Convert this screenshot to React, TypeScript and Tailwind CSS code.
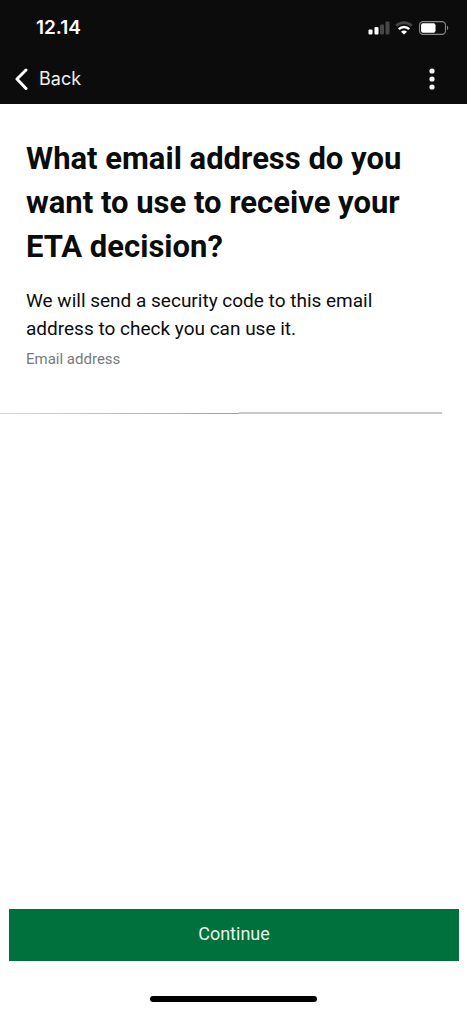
import { useState } from "react";

function StatusBar() {
  return (
    <div className="flex h-14 items-center justify-between pl-9 pr-[18px]">
      <span className="font-['Inter',sans-serif] text-[19px] font-semibold">12.14</span>
      <div className="flex items-center gap-[5px]">
        {/* Signal */}
        <svg width="22" height="14" viewBox="0 0 22 14" aria-hidden="true">
          <rect x="0.5" y="8.5" width="4" height="5" rx="1" fill="#fff" />
          <rect x="6.5" y="6" width="4" height="7.5" rx="1" fill="#fff" />
          <rect x="12" y="3.5" width="4" height="10" rx="1" fill="#464646" />
          <rect x="17.5" y="0.5" width="4" height="13" rx="1" fill="#464646" />
        </svg>
        {/* Wifi */}
        <svg width="18" height="14" viewBox="0 0 18 14" fill="none" aria-hidden="true">
          <path d="M1.2 4.8C5.5 0.6 12.5 0.6 16.8 4.8" stroke="#464646" strokeWidth="2.6" />
          <path d="M3.8 8.2C6.8 5.2 11.2 5.2 14.2 8.2" stroke="#fff" strokeWidth="2.6" />
          <path d="M9 13.5L6 10.7C7.6 9.1 10.4 9.1 12 10.7Z" fill="#fff" />
        </svg>
        {/* Battery */}
        <svg width="31" height="14" viewBox="0 0 31 14" fill="none" aria-hidden="true">
          <rect x="1.5" y="0.6" width="26" height="12.8" rx="3.6" stroke="#8a8a8a" strokeWidth="1.1" />
          <rect x="3" y="2.2" width="14.5" height="9.6" rx="2" fill="#fff" />
          <path d="M29 4.8C30.6 5.4 30.6 8.6 29 9.2Z" fill="#8a8a8a" />
        </svg>
      </div>
    </div>
  );
}

function NavBar() {
  return (
    <div className="flex h-12 items-center justify-between pl-3.5 pr-6 pb-0.5">
      <button type="button" className="flex items-center gap-[11px] text-[#f0f0f0]">
        <svg width="14" height="24" viewBox="0 0 14 24" fill="none" aria-hidden="true">
          <path
            d="M12 3L3 12L12 21.5"
            stroke="#fff"
            strokeWidth="3"
            strokeLinecap="round"
            strokeLinejoin="round"
          />
        </svg>
        <span className="font-['Inter',sans-serif] text-lg">Back</span>
      </button>
      <button type="button" aria-label="More options" className="flex w-[22px] justify-center">
        <svg width="6" height="22" viewBox="0 0 6 22" fill="#f5f5f5" aria-hidden="true">
          <circle cx="3" cy="3" r="2.6" />
          <circle cx="3" cy="11" r="2.6" />
          <circle cx="3" cy="19" r="2.6" />
        </svg>
      </button>
    </div>
  );
}

export default function App() {
  const [email, setEmail] = useState("");

  return (
    <div className="flex min-h-screen flex-col bg-white font-['Roboto',sans-serif] text-[#0b0c0c]">
      <header className="bg-[#0c0c0c] text-white">
        <StatusBar />
        <NavBar />
      </header>

      <main className="flex flex-1 flex-col">
        <div className="px-[26px] pt-[33px]">
          <h1 className="text-[31px] leading-11 font-bold">
            What email address do you want to use to receive your ETA decision?
          </h1>
          <p className="mt-[18px] text-[19px] leading-7">
            We will send a security code to this email address to check you can use it.
          </p>
          <label htmlFor="email" className="mt-1 block text-[15px] leading-6 text-[#777a7b]">
            Email address
          </label>
        </div>

        {/* Email field, underlined from the screen edge */}
        <div className="pr-[25px]">
          <input
            id="email"
            type="email"
            value={email}
            onChange={(e) => setEmail(e.target.value)}
            className="block h-[41px] w-full bg-transparent px-[26px] text-lg outline-none"
          />
          <div className="flex items-end">
            <div className="h-px flex-1 bg-linear-to-r from-[#d0dddd] to-[#9da3a3]" />
            <div className="h-0.5 w-[46%] bg-[#c7c9c9]" />
          </div>
        </div>

        <div className="mt-auto pr-2 pl-[9px]">
          <button
            type="button"
            className="h-[52px] w-full bg-[#00703c] pb-0.5 text-lg text-[#e6f1eb]"
          >
            Continue
          </button>
        </div>
      </main>

      <footer className="flex justify-center pt-[35px] pb-[9px]">
        <div className="h-1.5 w-[167px] rounded-full bg-black" />
      </footer>
    </div>
  );
}
